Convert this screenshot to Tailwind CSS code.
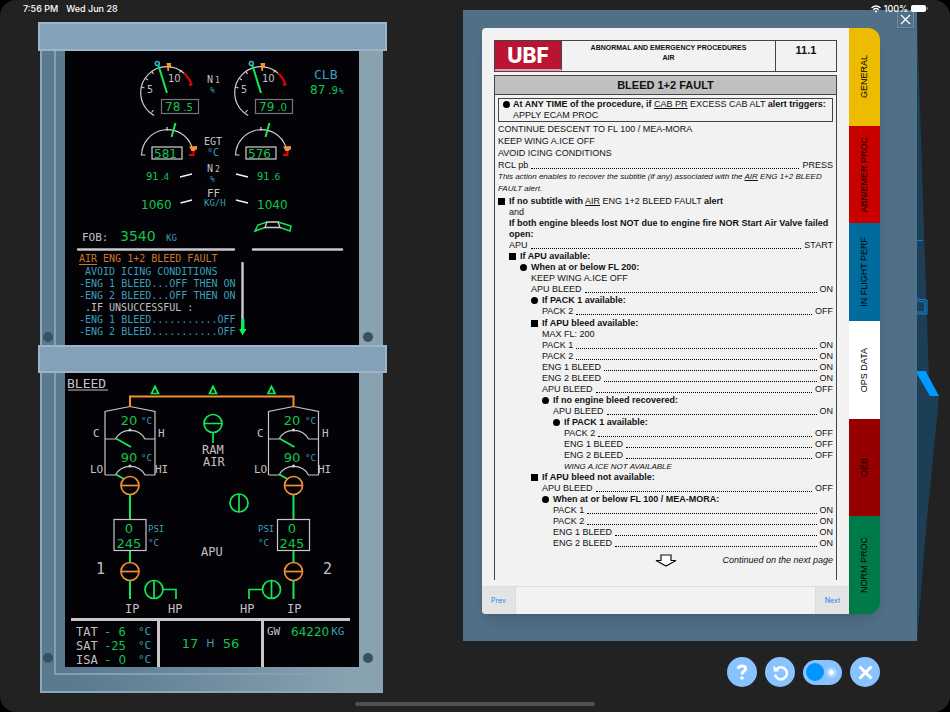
<!DOCTYPE html>
<html lang="en">
<head>
  <meta charset="UTF-8" />
  <meta name="viewport" content="width=device-width, initial-scale=1.0"/>
  <title>ECAM Trainer | Bleed 1+2 Fault</title>
  <script src="https://cdn.jsdelivr.net/npm/@tailwindcss/browser@4"></script>
</head>
<body class="bg-black">

<div class="relative min-h-screen bg-[#222222] rounded-[16px] overflow-hidden font-['Liberation_Sans',sans-serif]">

  <!-- Status bar -->
  <header class="absolute inset-x-0 top-0 z-20 flex items-center justify-between h-4 pl-[23px] pr-[22px] pt-px text-[9px] leading-4 font-medium text-white font-['Inter',sans-serif]">
    <div class="flex gap-2">
      <span>7:56 PM</span>
      <span>Wed Jun 28</span>
    </div>
    <div class="flex items-center gap-[3px]">
      <svg class="w-[10px] h-[8px]" viewBox="0 0 20 15" fill="none" stroke="#fff" stroke-width="2.6">
        <path d="M1 5.500Q10 -2.500 19 5.500M4.400 9Q10 4 15.600 9" />
        <path d="M7 11.500Q10 9 13 11.500L10 15Z" fill="#fff" stroke="none" />
      </svg>
      <span>100%</span>
      <svg class="w-[17px] h-[7px]" viewBox="0 0 17 7">
        <rect width="15" height="7" rx="2" fill="#fff" />
        <path d="M16 2.200Q17 3.500 16 4.800Z" fill="#aaa" stroke="#aaa" stroke-width=".5" />
      </svg>
    </div>
  </header>

  <main class="flex items-start pl-[38px] pr-[33px]">

    <!-- ECAM displays -->
    <section class="w-[349px] shrink-0 pt-[22px] font-['DejaVu_Sans_Mono',monospace]">

      <!-- Upper display -->
      <div class="h-[29px] bg-[#84a1b7] border-2 border-[#9bb4c7]"></div>
      <div class="relative ml-[2px] mr-[4px] pl-[23px] pr-[24px] border-l-2 border-[#8ba7ba] bg-linear-to-r from-[#5a7a90] from-10% to-[#88a2b0] to-90%">
        <div class="absolute left-[12px] inset-y-0 w-[2px] bg-[#84a0b1]"></div>
        <div class="absolute left-px bottom-[3px] size-[10px] rounded-full bg-[#38505f]"></div>
        <div class="absolute right-[10px] bottom-[3px] size-[10px] rounded-full bg-[#38505f]"></div>
        <div class="bg-[#030207]">
          <svg class="block w-full" viewBox="65 51 294 201" fill="none">
            <defs>
              <g id="n1" stroke-width="1.2">
                <path d="M154.200 115.500A26 26 0 0 1 140.700 92.700A26 26 0 0 1 166.700 66.700A26 26 0 0 1 184 73.300" stroke="#d2d0d2" />
                <path d="M151.500 112.500L153.500 110M141.500 87L144.500 88M145.500 78.500L148 80M152 71.500L153.500 74M181.500 70L179.500 72.500" stroke="#d2d0d2" />
                <path d="M184 73.300A26 26 0 0 1 191.500 84.500L189 85" stroke="#f00000" stroke-width="2" />
                <path d="M158.300 65L167 93" stroke="#12e858" stroke-width="2" />
                <circle cx="157.300" cy="63.500" r="2" stroke="#3fb4d0" stroke-width="1.500" />
                <path d="M166.500 63H171V68H169V71H167.500Z" fill="#f09530" />
                <rect x="161.500" y="99.500" width="37" height="14" stroke="#777579" />
              </g>
              <g id="egt" stroke-width="1.200">
                <path d="M145.500 155H141.500A26 26 0 0 1 192 147M167 127V131" stroke="#d2d0d2" />
                <path d="M193.500 149V155H189" stroke="#f00000" stroke-width="2" />
                <path d="M175.500 123L171.500 137" stroke="#12e858" stroke-width="2" />
                <path d="M189 146.500L197 146V149.500L195 150V151H191.500Z" fill="#f09530" />
                <rect x="152" y="147" width="30" height="12" stroke="#d2d0d2" />
              </g>
            </defs>
            <use href="#n1" /><use href="#n1" x="94" />
            <use href="#egt" /><use href="#egt" x="94" />

            <g fill="#c4c0c2" font-size="10">
              <text x="147" y="93">5</text><text x="241" y="93">5</text>
              <text x="207" y="83">N<tspan font-size="8" dx="2">1</tspan></text>
              <text x="204" y="145">EGT</text>
              <text x="207" y="172">N<tspan font-size="8" dx="2">2</tspan></text>
              <text x="207" y="197" font-size="11">FF</text>
              <text x="82" y="241" font-size="11">FOB:</text>
              <g font-family="DejaVu Sans"><text x="168" y="82">10</text><text x="262" y="82">10</text></g>
            </g>
            <g fill="#3a9fb8" font-size="9">
              <text x="210" y="93" font-size="8">%</text>
              <text x="207" y="156" font-size="10">°C</text>
              <text x="210" y="182" font-size="8">%</text>
              <text x="204" y="206">KG/H</text>
              <text x="166" y="241">KG</text>
              <text x="314" y="79" font-size="13">CLB</text>
            </g>
            <g fill="#10c64c" font-size="12" font-family="DejaVu Sans">
              <text x="165" y="111">78<tspan font-size="10" dx="3">.5</tspan></text>
              <text x="259" y="111">79<tspan font-size="10" dx="3">.0</tspan></text>
              <text x="154" y="158">581</text><text x="248" y="158">576</text>
              <text x="146" y="180" font-size="10">91<tspan font-size="9" dx="2">.4</tspan></text>
              <text x="257" y="180" font-size="10">91<tspan font-size="9" dx="2">.6</tspan></text>
              <text x="141" y="209">1060</text><text x="257" y="209">1040</text>
              <text x="120" y="241" font-size="14">3540</text>
              <text x="310" y="94">87<tspan font-size="10" dx="3">.9</tspan><tspan font-size="8" dx="1" fill="#3a9fb8" font-family="DejaVu Sans Mono">%</tspan></text>
            </g>

            <path d="M180 177L192 174M236 174L248 177M180.500 203L192 200M236 200L248 203" stroke="#f2f2f2" stroke-width="1.800" />
            <path d="M267 222L258 225L255 231L265 227.500M278 222L291 226L290 231L280 227.500" stroke="#12e858" stroke-width="1.500" />
            <path d="M267 222H278L280 227.500H265Z" stroke="#cfcfcf" stroke-width="1.300" />
            <path d="M78 249.500H234M253 249.500H342" stroke="#cbc7c8" stroke-width="2.500" stroke-linecap="round" />
          </svg>

          <!-- Warning messages -->
          <div class="flex h-[93px] pl-[14px] text-[10px] leading-[12px] whitespace-nowrap text-[#3a9fb8]">
            <div class="w-[157px]">
              <p class="leading-[14px] text-[#c8782b]"><span class="underline underline-offset-2">AIR</span> ENG 1+2 BLEED FAULT</p>
              <p class="pl-[6px]">AVOID ICING CONDITIONS</p>
              <p>-ENG 1 BLEED...OFF THEN ON</p>
              <p>-ENG 2 BLEED...OFF THEN ON</p>
              <p class="pl-[6px] text-[#c4c0c2]">.IF UNSUCCESSFUL :</p>
              <p>-ENG 1 BLEED...........OFF</p>
              <p>-ENG 2 BLEED...........OFF</p>
            </div>
            <svg class="w-[10px] h-[75px] mt-[10px] ml-px" viewBox="0 0 10 75">
              <path d="M5.500 1V58" stroke="#cbc7c8" stroke-width="2.500" stroke-linecap="round" />
              <path d="M4 57H7.500V67H9.500L5.500 73.500L2 67H4Z" fill="#12e858" />
            </svg>
          </div>
        </div>
      </div>

      <!-- Lower display -->
      <div class="h-[28px] bg-[#84a1b7] border-2 border-[#9bb4c7]"></div>
      <div class="relative ml-[2px] mr-[4px] pl-[23px] pr-[24px] pb-[24px] border-l-2 border-b-2 border-[#8ba7ba] bg-linear-to-r from-[#5a7a90] from-10% to-[#88a2b0] to-90%">
        <div class="absolute left-[12px] top-0 bottom-[16px] w-[284px] border-l-2 border-b-2 border-[#84a0b1]"></div>
        <div class="absolute left-px bottom-[28px] size-[10px] rounded-full bg-[#38505f]"></div>
        <div class="absolute right-[10px] bottom-[28px] size-[10px] rounded-full bg-[#38505f]"></div>
        <div class="relative bg-[#030207]">
          <svg class="block w-full" viewBox="65 373 294 245" fill="none">
            <defs>
              <g id="pack" stroke="#cbc7c8" stroke-width="1.200">
                <path d="M105 475V411.500L130 406.500L155 411.500V475M105 439H115.500A17 17 0 0 1 145 439H155M105 475H115.500A17 17 0 0 1 145 475H155" />
                <circle cx="130" cy="430" r="1" fill="#fff" /><circle cx="130" cy="466" r="1" fill="#fff" />
                <path d="M116 438.500L131 447M116 474.500L124 479M130 495V519M130 551V562M130 581V599" stroke="#12e858" stroke-width="2" />
                <g stroke="#f09030" stroke-width="1.700">
                  <circle cx="130" cy="485.500" r="9" /><path d="M121 485.500H139" />
                  <circle cx="130" cy="571.500" r="9" /><path d="M121 571.500H139" />
                </g>
                <rect x="114" y="519.500" width="32" height="31" />
              </g>
            </defs>
            <use href="#pack" /><use href="#pack" x="163.500" />
            <path d="M130 407V396.500H293.500V407" stroke="#f09030" stroke-width="2" />
            <g stroke="#12e858" stroke-width="1.700">
              <path d="M155 386.500L158.500 393.500H151.500ZM213 386.500L216.500 393.500H209.500ZM271.500 386.500L275 393.500H268Z" />
              <circle cx="213" cy="423.500" r="9" /><path d="M204 423.500H222M213 433V443" />
              <circle cx="239" cy="503" r="9" /><path d="M239 494V512" />
              <circle cx="154" cy="589.500" r="9" /><path d="M154 580.500V598.500M163 589.500H176V599" />
              <circle cx="271.500" cy="589.500" r="9" /><path d="M271.500 580.500V598.500M262.500 589.500H249V599" />
            </g>

            <g fill="#c4c0c2" font-size="12">
              <text x="67" y="388" font-size="13">BLEED</text>
              <g font-size="11">
                <text x="93" y="437">C</text><text x="158" y="437">H</text>
                <text x="90" y="473">LO</text><text x="155" y="473">HI</text>
                <text x="257" y="437">C</text><text x="322" y="437">H</text>
                <text x="254" y="473">LO</text><text x="318" y="473">HI</text>
              </g>
              <text x="202" y="454">RAM</text><text x="203" y="466">AIR</text>
              <text x="201" y="556">APU</text>
              <text x="125" y="613">IP</text><text x="168" y="613">HP</text>
              <text x="240" y="613">HP</text><text x="287" y="613">IP</text>
              <text x="96" y="574" font-size="15">1</text><text x="323" y="574" font-size="15">2</text>
            </g>
            <path d="M68 390H108" stroke="#c4c0c2" />
            <g fill="#3a9fb8" font-size="9">
              <text x="141" y="424">°C</text><text x="141" y="461">°C</text>
              <text x="305" y="424">°C</text><text x="305" y="461">°C</text>
              <text x="148" y="532">PSI</text><text x="148" y="546">°C</text>
              <text x="258" y="532">PSI</text><text x="258" y="546">°C</text>
            </g>
            <g fill="#10c64c" font-size="13" font-family="DejaVu Sans" text-anchor="middle">
              <text x="129" y="425">20</text><text x="129" y="462">90</text>
              <text x="292" y="425">20</text><text x="292" y="462">90</text>
              <text x="129" y="533">0</text><text x="129" y="548">245</text>
              <text x="292" y="533">0</text><text x="292" y="548">245</text>
            </g>
          </svg>

          <!-- Permanent data -->
          <div class="flex h-[49px] ml-[6px] mr-[9px] border-t-[3px] border-[#cbc7c8] text-[12px] leading-[14px] whitespace-nowrap text-[#10c64c]">
            <div class="w-[89px] pt-[4px] pl-[5px] border-r-[3px] border-[#cbc7c8]">
              <p class="flex"><span class="w-[28px] text-[#c4c0c2]">TAT</span><span class="w-[34px]">-&nbsp;6</span><span class="text-[#3a9fb8] text-[11px]">°C</span></p>
              <p class="flex"><span class="w-[28px] text-[#c4c0c2]">SAT</span><span class="w-[34px]">-25</span><span class="text-[#3a9fb8] text-[11px]">°C</span></p>
              <p class="flex"><span class="w-[28px] text-[#c4c0c2]">ISA</span><span class="w-[34px]">-&nbsp;<span class="font-['DejaVu_Sans']">0</span></span><span class="text-[#3a9fb8] text-[11px]">°C</span></p>
            </div>
            <div class="flex-1 flex items-center justify-center gap-2 text-[13px] font-['DejaVu_Sans']">
              <span>17</span><span class="text-[11px] text-[#3a9fb8]">H</span><span>56</span>
            </div>
            <div class="w-[89px] flex items-start pt-[4px] pl-[3px] border-l-[3px] border-[#cbc7c8]">
              <span class="w-[24px] text-[11px] text-[#c4c0c2]">GW</span>
              <span class="font-['DejaVu_Sans']">64220</span>
              <span class="pl-[2px] text-[11px] text-[#3a9fb8]">KG</span>
            </div>
          </div>
        </div>
      </div>
    </section>

    <!-- QRH -->
    <section class="relative flex-1 ml-[76px] mt-[10px]">

      <!-- Cockpit background behind the panel -->
      <svg class="absolute left-full top-0 w-[24px] h-[632px]" viewBox="917 10 24 632" fill="none">
        <path d="M917 16L923 200L929 380L939 397L925 540L917 642Z" fill="#1c3f57" />
        <path d="M917 240.500H923" stroke="#0a7fd6" />
        <path d="M917 299L927 300V314H917M917 301L925 302V312H917" stroke="#0a86e0" />
        <path d="M917 371H925.500L939 396H930L917 374Z" fill="#0099ff" />
      </svg>

      <div class="relative bg-[#507087] pt-[18px] pl-[19px] pr-[37px] pb-[27px]">
        <button aria-label="Close" class="absolute top-px right-[3px] size-[17px] flex items-center justify-center border border-[#6e8da4] bg-[#507087] shadow">
          <svg class="size-[11px]" viewBox="0 0 11 11" stroke="#fff" stroke-width="1.300"><path d="M1 1L10 10M10 1L1 10" /></svg>
        </button>

        <div class="flex rounded-[4px] rounded-r-[16px] shadow-lg">
          <article class="flex-1 min-w-0 rounded-l-[4px] bg-[#f2f2f2] text-[#111111] text-[9px] leading-[11px] overflow-hidden">
            <div class="px-[12px] pt-[12px]">

              <!-- Page heading -->
              <div class="flex h-[32px] border border-[#444444] font-bold text-center">
                <div class="w-[67px] border-r border-b-2 border-r-[#444444] border-b-[#e6a0aa] bg-[#bb1433] text-white text-[21px] leading-[30px] font-extrabold font-['Inter',sans-serif]">UBF</div>
                <p class="flex-1 pt-[2px] text-[7px] leading-[10px]">ABNORMAL AND EMERGENCY PROCEDURES<br>AIR</p>
                <p class="w-[61px] pt-[3px] border-l border-[#444444] text-[11px] leading-[12px]">11.1</p>
              </div>
              <h1 class="mt-[3px] h-[20px] border border-[#444444] bg-[#c0c0c0] text-center text-[11px] leading-[18px] font-bold">BLEED 1+2 FAULT</h1>

              <div class="border-x border-[#444444] px-[3px] pt-[3px] pb-[13px]">
                <div class="border border-[#444444] pl-[4px] pr-1">
                  <p class="flex items-center"><span class="size-[7px] mr-[3px] rounded-full bg-black"></span><span><b>At ANY TIME of the procedure, if</b> <u>CAB PR</u> EXCESS CAB ALT <b>alert triggers:</b></span></p>
                  <p class="pl-[10px]">APPLY ECAM PROC</p>
                </div>

                <div class="pt-[1px] leading-[12px]">
                  <p>CONTINUE DESCENT TO FL 100 / MEA-MORA</p>
                  <p>KEEP WING A.ICE OFF</p>
                  <p>AVOID ICING CONDITIONS</p>
                  <p class="flex items-end gap-[3px]">RCL pb<span class="flex-1 mb-[2px] border-b border-dotted border-black"></span>PRESS</p>
                  <p class="italic text-[8px]">This action enables to recover the subtitle (if any) associated with the <u>AIR</u> ENG 1+2 BLEED<br>FAULT alert.</p>
                </div>

                <p class="flex items-center mt-px"><span class="size-[7px] mr-[4px] bg-black"></span><span><b>If no subtitle with</b> <u>AIR</u> ENG 1+2 BLEED FAULT <b>alert</b></span></p>
                <div class="pl-[11px]">
                  <p>and</p>
                  <p class="font-bold">If both engine bleeds lost NOT due to engine fire NOR Start Air Valve failed open:</p>
                  <p class="flex items-end gap-[3px]">APU<span class="flex-1 mb-[2px] border-b border-dotted border-black"></span>START</p>
                  <p class="flex items-center font-bold"><span class="size-[7px] mr-[4px] bg-black"></span>If APU available:</p>
                  <div class="pl-[11px]">
                    <p class="flex items-center font-bold"><span class="size-[7px] mr-[4px] rounded-full bg-black"></span>When at or below FL 200:</p>
                    <div class="pl-[11px]">
                      <p>KEEP WING A.ICE OFF</p>
                      <p class="flex items-end gap-[3px]">APU BLEED<span class="flex-1 mb-[2px] border-b border-dotted border-black"></span>ON</p>
                      <p class="flex items-center font-bold"><span class="size-[7px] mr-[4px] rounded-full bg-black"></span>If PACK 1 available:</p>
                      <div class="pl-[11px]">
                        <p class="flex items-end gap-[3px]">PACK 2<span class="flex-1 mb-[2px] border-b border-dotted border-black"></span>OFF</p>
                      </div>
                      <p class="flex items-center mt-px font-bold"><span class="size-[7px] mr-[4px] bg-black"></span>If APU bleed available:</p>
                      <div class="pl-[11px]">
                        <p>MAX FL: 200</p>
                        <p class="flex items-end gap-[3px]">PACK 1<span class="flex-1 mb-[2px] border-b border-dotted border-black"></span>ON</p>
                        <p class="flex items-end gap-[3px]">PACK 2<span class="flex-1 mb-[2px] border-b border-dotted border-black"></span>ON</p>
                        <p class="flex items-end gap-[3px]">ENG 1 BLEED<span class="flex-1 mb-[2px] border-b border-dotted border-black"></span>ON</p>
                        <p class="flex items-end gap-[3px]">ENG 2 BLEED<span class="flex-1 mb-[2px] border-b border-dotted border-black"></span>ON</p>
                        <p class="flex items-end gap-[3px]">APU BLEED<span class="flex-1 mb-[2px] border-b border-dotted border-black"></span>OFF</p>
                        <p class="flex items-center font-bold"><span class="size-[7px] mr-[4px] rounded-full bg-black"></span>If no engine bleed recovered:</p>
                        <div class="pl-[11px]">
                          <p class="flex items-end gap-[3px]">APU BLEED<span class="flex-1 mb-[2px] border-b border-dotted border-black"></span>ON</p>
                          <p class="flex items-center font-bold"><span class="size-[7px] mr-[4px] rounded-full bg-black"></span>If PACK 1 available:</p>
                          <div class="pl-[11px]">
                            <p class="flex items-end gap-[3px]">PACK 2<span class="flex-1 mb-[2px] border-b border-dotted border-black"></span>OFF</p>
                            <p class="flex items-end gap-[3px]">ENG 1 BLEED<span class="flex-1 mb-[2px] border-b border-dotted border-black"></span>OFF</p>
                            <p class="flex items-end gap-[3px]">ENG 2 BLEED<span class="flex-1 mb-[2px] border-b border-dotted border-black"></span>OFF</p>
                            <p class="italic text-[8px] leading-[11px]">WING A.ICE NOT AVAILABLE</p>
                          </div>
                        </div>
                      </div>
                      <p class="flex items-center font-bold"><span class="size-[7px] mr-[4px] bg-black"></span>If APU bleed not available:</p>
                      <div class="pl-[11px]">
                        <p class="flex items-end gap-[3px]">APU BLEED<span class="flex-1 mb-[2px] border-b border-dotted border-black"></span>OFF</p>
                        <p class="flex items-center font-bold"><span class="size-[7px] mr-[4px] rounded-full bg-black"></span>When at or below FL 100 / MEA-MORA:</p>
                        <div class="pl-[11px]">
                          <p class="flex items-end gap-[3px]">PACK 1<span class="flex-1 mb-[2px] border-b border-dotted border-black"></span>ON</p>
                          <p class="flex items-end gap-[3px]">PACK 2<span class="flex-1 mb-[2px] border-b border-dotted border-black"></span>ON</p>
                          <p class="flex items-end gap-[3px]">ENG 1 BLEED<span class="flex-1 mb-[2px] border-b border-dotted border-black"></span>ON</p>
                          <p class="flex items-end gap-[3px]">ENG 2 BLEED<span class="flex-1 mb-[2px] border-b border-dotted border-black"></span>ON</p>
                        </div>
                      </div>
                    </div>
                  </div>
                </div>

                <div class="grid grid-cols-[1fr_22px_1fr] items-center pt-[5px]">
                  <svg class="col-start-2 w-[22px] h-[13px]" viewBox="0 0 22 13" fill="#fff" stroke="#111" stroke-width="1.200">
                    <path d="M6 1H16V6.500H21L11 12L1 6.500H6Z" />
                  </svg>
                  <p class="italic text-right whitespace-nowrap">Continued on the next page</p>
                </div>
              </div>
            </div>

            <!-- Pager -->
            <div class="flex justify-between h-[28px] mt-[6px] border-t border-[#dddddd] text-[7px] text-[#1a82f7] font-['Inter',sans-serif]">
              <button class="w-[34px] bg-[#e4e4e4] border-r border-[#dddddd]">Prev</button>
              <button class="w-[34px] bg-[#e4e4e4] border-l border-[#dddddd]">Next</button>
            </div>
          </article>

          <!-- Section tabs -->
          <nav class="w-[31px] flex flex-col rounded-r-[12px] overflow-hidden text-[9px] text-black">
            <a href="#general" class="flex-1 flex items-center justify-center bg-[#edbb00]"><span class="[writing-mode:vertical-rl] rotate-180">GENERAL</span></a>
            <a href="#abn" class="flex-1 flex items-center justify-center bg-[#c80000]"><span class="[writing-mode:vertical-rl] rotate-180">ABN/EMER PROC</span></a>
            <a href="#perf" class="flex-1 flex items-center justify-center bg-[#006b9c]"><span class="[writing-mode:vertical-rl] rotate-180">IN FLIGHT PERF</span></a>
            <a href="#ops" class="flex-1 flex items-center justify-center bg-white"><span class="[writing-mode:vertical-rl] rotate-180">OPS DATA</span></a>
            <a href="#oeb" class="flex-1 flex items-center justify-center bg-[#960000]"><span class="[writing-mode:vertical-rl] rotate-180">OEB</span></a>
            <a href="#norm" class="flex-1 flex items-center justify-center bg-[#007a48]"><span class="[writing-mode:vertical-rl] rotate-180">NORM PROC</span></a>
          </nav>
        </div>
      </div>

      <!-- Actions -->
      <div class="flex items-center justify-end gap-[8px] mt-[16px] pr-[37px]">
        <button aria-label="Help" class="size-[30px] rounded-full bg-[#88c2ff] flex items-center justify-center">
          <svg class="w-[12px] h-[16px]" viewBox="0 0 12 16" fill="none" stroke="#fff" stroke-width="3">
            <path d="M2 4.800Q2.600 2 6 2Q9.600 2 9.600 4.700Q9.600 6.300 7.600 7.400Q6 8.300 6 10.500" />
            <circle cx="6" cy="14" r="1.800" fill="#fff" stroke="none" />
          </svg>
        </button>
        <button aria-label="Restart" class="size-[30px] rounded-full bg-[#88c2ff] flex items-center justify-center">
          <svg class="size-[17px]" viewBox="0 0 17 17" fill="none" stroke="#fff" stroke-width="2.600">
            <path d="M4.300 5.400A6 6 0 1 1 3 10.500" />
            <path d="M1.300 1.500L1.800 7.500L7.500 7.300Z" fill="#fff" stroke="none" />
          </svg>
        </button>
        <label class="w-[39px] h-[25px] px-[3px] rounded-full bg-[#88c2ff] flex items-center justify-between">
          <input type="checkbox" aria-label="Day mode" class="sr-only" />
          <span class="size-[18px] rounded-full bg-[#0095ff]"></span>
          <svg class="size-[11px] mr-[2px]" viewBox="0 0 11 11" stroke="#e8f4ff">
            <circle cx="5.500" cy="5.500" r="2.700" fill="#fff" />
            <circle cx="5.500" cy="5.500" r="4.500" fill="none" stroke-dasharray="1.200 1.100" stroke-width="1.200" />
          </svg>
        </label>
        <button aria-label="Exit" class="size-[30px] rounded-full bg-[#88c2ff] flex items-center justify-center">
          <svg class="size-[15px]" viewBox="0 0 15 15" stroke="#fff" stroke-width="3"><path d="M1.500 1.500L13.500 13.500M13.500 1.500L1.500 13.500" /></svg>
        </button>
      </div>
    </section>
  </main>

  <!-- Home indicator -->
  <div class="absolute bottom-[6px] left-1/2 -translate-x-1/2 w-[240px] h-[4px] rounded-full bg-[#4f4f4f]"></div>
</div>

</body>
</html>
